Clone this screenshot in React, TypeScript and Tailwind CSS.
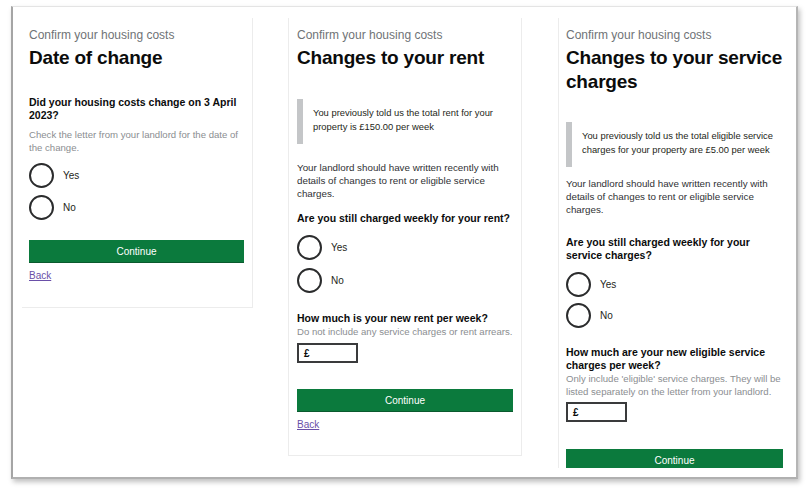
import React from 'react';

const font = { fontFamily: '"Liberation Sans", Arial, sans-serif' };

function Lines({ lines, className }: { lines: string[]; className: string }) {
  return (
    <div className={className}>
      {lines.map((l, i) => (
        <div key={i} className="whitespace-nowrap">
          {l}
        </div>
      ))}
    </div>
  );
}

function Caption() {
  return <div className="text-[12px] leading-[16px] text-[#6f7376]">Confirm your housing costs</div>;
}

function Heading({ lines }: { lines: string[] }) {
  return (
    <Lines
      lines={lines}
      className="mt-[3px] text-[19px] font-bold leading-[24px] tracking-[-0.2px] text-[#0b0c0c]"
    />
  );
}

function Radio({ label, className = '' }: { label: string; className?: string }) {
  return (
    <div className={`flex items-center gap-[9px] ${className}`}>
      <div className="h-[25px] w-[25px] shrink-0 rounded-full border-2 border-[#2b2c2d]" />
      <span className="text-[10px] leading-[13px] text-[#1e1f20]">{label}</span>
    </div>
  );
}

function Inset({ lines, className = '' }: { lines: string[]; className?: string }) {
  return (
    <div className={`flex h-[45px] ${className}`}>
      <div className="w-[6px] shrink-0 bg-[#c4c6c8]" />
      <Lines lines={lines} className="pl-[10px] pt-[7px] text-[9.4px] leading-[14px] text-[#1e1f20]" />
    </div>
  );
}

function MoneyInput({ className = '' }: { className?: string }) {
  return (
    <div
      className={`flex h-[20px] w-[61px] items-center border-2 border-[#3a3b3c] pl-[5px] text-[10px] font-bold text-[#0b0c0c] ${className}`}
    >
      £
    </div>
  );
}

function ContinueButton({ className = '' }: { className?: string }) {
  return (
    <div
      className={`flex h-[22px] w-full items-center justify-center bg-[#0b7a3d] text-[10px] text-white shadow-[0_1px_0_#0a5a2e] ${className}`}
    >
      Continue
    </div>
  );
}

function Back({ className = '' }: { className?: string }) {
  return (
    <div className={`text-[10px] leading-[13px] text-[#6a4fa8] underline ${className}`}>Back</div>
  );
}

const question = 'text-[10.5px] font-bold leading-[13px] text-[#0b0c0c]';
const hint = 'text-[9.6px] leading-[13px] text-[#8b8e91]';
const body = 'text-[9.8px] leading-[13px] text-[#2f3133]';

export default function App() {
  return (
    <div className="h-[493px] w-[808px] overflow-hidden bg-white pt-[6px] pl-[11px]" style={font}>
      <div className="h-[473px] w-[787px] border-t border-l-2 border-r-2 border-b-2 border-t-[#e4e4e4] border-l-[#a5a5a5] border-r-[#b5b5b5] border-b-[#b0b0b0] shadow-[2px_3px_5px_rgba(0,0,0,0.25)]">
        <div className="flex h-[461px] items-start overflow-hidden pt-[11px] pl-[9px]">
          {/* Date of change */}
          <div className="h-[290px] w-[231px] shrink-0 border-r border-b border-[#ececec] pt-[9px] pl-[7px] pr-[8px]">
            <Caption />
            <Heading lines={['Date of change']} />
            <Lines className={`mt-[26px] ${question}`} lines={['Did your housing costs change on 3 April', '2023?']} />
            <Lines
              className={`mt-[6px] ${hint}`}
              lines={['Check the letter from your landlord for the date of', 'the change.']}
            />
            <Radio label="Yes" className="mt-[9px]" />
            <Radio label="No" className="mt-[7px]" />
            <ContinueButton className="mt-[20px]" />
            <Back className="mt-[7px]" />
          </div>

          {/* Changes to your rent */}
          <div className="ml-[35px] h-[438px] w-[234px] shrink-0 border-l border-r border-b border-[#ececec] pt-[9px] pl-[8px] pr-[8px]">
            <Caption />
            <Heading lines={['Changes to your rent']} />
            <Inset
              className="mt-[29px]"
              lines={['You previously told us the total rent for your', 'property is £150.00 per week']}
            />
            <Lines
              className={`mt-[17px] ${body}`}
              lines={[
                'Your landlord should have written recently with',
                'details of changes to rent or eligible service',
                'charges.',
              ]}
            />
            <div className={`mt-[12px] ${question}`}>Are you still charged weekly for your rent?</div>
            <Radio label="Yes" className="mt-[10px]" />
            <Radio label="No" className="mt-[8px]" />
            <div className={`mt-[19px] ${question}`}>How much is your new rent per week?</div>
            <div className={`whitespace-nowrap ${hint}`}>Do not include any service charges or rent arrears.</div>
            <MoneyInput className="mt-[5px]" />
            <ContinueButton className="mt-[26px]" />
            <Back className="mt-[7px]" />
          </div>

          {/* Changes to your service charges */}
          <div className="ml-[36px] h-[470px] w-[238px] shrink-0 border-l border-[#ececec] pt-[9px] pl-[7px] pr-[13px]">
            <Caption />
            <Heading lines={['Changes to your service', 'charges']} />
            <Inset
              className="mt-[28px]"
              lines={['You previously told us the total eligible service', 'charges for your property are £5.00 per week']}
            />
            <Lines
              className={`mt-[10px] ${body}`}
              lines={[
                'Your landlord should have written recently with',
                'details of changes to rent or eligible service',
                'charges.',
              ]}
            />
            <Lines className={`mt-[20px] ${question}`} lines={['Are you still charged weekly for your', 'service charges?']} />
            <Radio label="Yes" className="mt-[10px]" />
            <Radio label="No" className="mt-[6px]" />
            <Lines
              className={`mt-[18px] ${question}`}
              lines={['How much are your new eligible service', 'charges per week?']}
            />
            <Lines
              className={hint}
              lines={[
                "Only include 'eligible' service charges. They will be",
                'listed separately on the letter from your landlord.',
              ]}
            />
            <MoneyInput className="mt-[4px]" />
            <ContinueButton className="mt-[27px]" />
          </div>
        </div>
      </div>
    </div>
  );
}
